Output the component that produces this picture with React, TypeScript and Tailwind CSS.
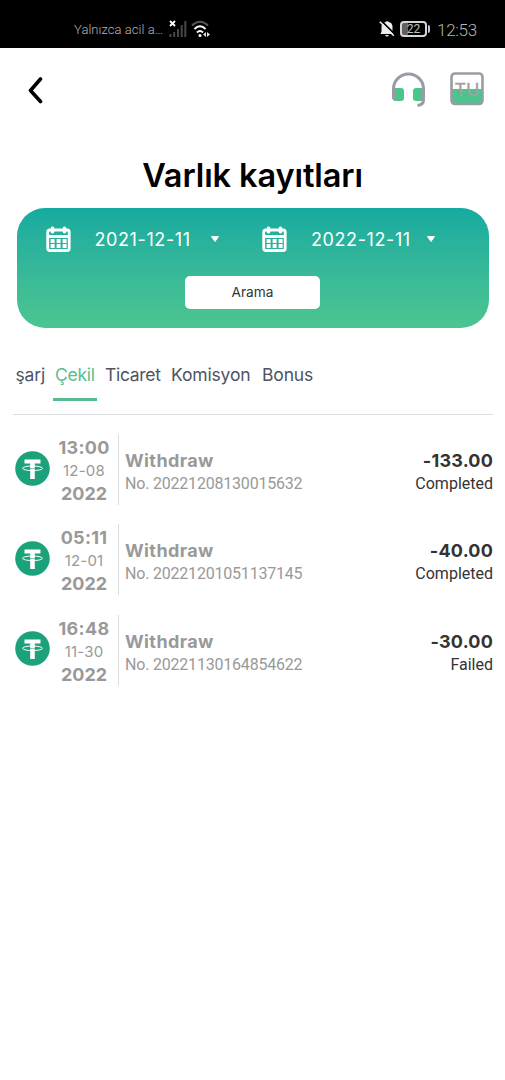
import React from 'react';

const records = [
  { time: '13:00', day: '12-08', year: '2022', no: '20221208130015632', amount: '-133.00', status: 'Completed' },
  { time: '05:11', day: '12-01', year: '2022', no: '20221201051137145', amount: '-40.00', status: 'Completed' },
  { time: '16:48', day: '11-30', year: '2022', no: '20221130164854622', amount: '-30.00', status: 'Failed' },
];

function StatusBar() {
  return (
    <div className="flex h-12 items-start bg-black pr-7 pl-[74px] text-[#b4b4b4]">
      <span className="mt-5 w-[95px] font-['Roboto',sans-serif] text-[13px] leading-5 font-light tracking-[0.050px] whitespace-nowrap">Yalnızca acil a…</span>
      <svg className="mt-[19px] h-[19px] w-[18px]" viewBox="0 0 18 19">
        <path d="M1 2l5 5M6 2L1 7" stroke="#fff" strokeWidth="1.8" />
        <path d="M1.5 15v3M5.2 13v5M9 10v8M12.7 6v12M16.3 2v16" stroke="#484848" strokeWidth="2" />
      </svg>
      <svg className="mt-[19px] ml-1 h-[19px] w-5" viewBox="0 0 20 19" fill="none">
        <path d="M1 6.5Q9 -1 17 6.5" stroke="#555" strokeWidth="2" />
        <path d="M3.500 10Q9 4.500 14.500 10M6 13.500q3-3 6 0" stroke="#fff" strokeWidth="2" />
        <circle cx="9" cy="16.500" r="1.500" fill="#fff" />
        <path d="M15 13v5l-3-2.500zM16 13v5l3-2.500z" fill="#ddd" />
      </svg>
      <div className="flex-1" />
      <svg className="mt-5 h-[18px] w-4" viewBox="0 0 16 18">
        <path d="M1.500 14h13.500l-1.500-2.500V7q0-4-3.200-4.700Q8 0 6.200 2.300 2.500 3 2.500 7v4.500zM6 15h4q-2 3-4 0z" fill="#eee" />
        <path d="M2.200 .6l14 14" stroke="#000" strokeWidth="1.600" />
        <path d="M.8 1.700l14 14" stroke="#eee" strokeWidth="1.600" />
      </svg>
      <div className="mt-[21px] ml-[5px] flex h-4 w-[27px] items-center justify-center rounded-[4px] border-2 border-[#d5d5d5] bg-linear-to-r from-[#606060] from-25% to-black to-25% font-['Roboto',sans-serif] text-[12px] leading-none text-[#c0c0c0]">22</div>
      <div className="mt-[25px] ml-px h-2 w-[2px] rounded-r bg-[#c8c8c8]" />
      <span className="mt-[20px] ml-[7px] w-[40px] font-['Roboto',sans-serif] text-[17px] leading-5 font-light tracking-[-0.3px] whitespace-nowrap">12:53</span>
    </div>
  );
}

function Calendar() {
  return (
    <svg className="h-[26px] w-[25px]" viewBox="0 0 25 26" fill="none">
      <rect x="1.700" y="4" width="21.500" height="20.500" rx="2" stroke="#fff" strokeWidth="2.800" />
      <path d="M1.500 10.500h22" stroke="#fff" strokeWidth="3" />
      <path d="M6.500 2.500v3M18.500 2.500v3" stroke="#fff" strokeWidth="3.800" strokeLinecap="round" />
      <path d="M4.600 15h16M4.600 20h16" stroke="#fff" strokeWidth="3.800" strokeDasharray="4 2" />
    </svg>
  );
}

function DateField({ value }: { value: string }) {
  return (
    <div className="flex h-[26px] w-[216.500px] items-center">
      <Calendar />
      <span className="mt-[2px] ml-[24px] w-[98px] text-[18px] leading-6 tracking-[0.600px] whitespace-nowrap">{value}</span>
      <svg className="ml-[17px] h-[9px] w-[10px]" viewBox="0 0 10 9">
        <path d="M1.500 1.500h7L5 6.500z" fill="#fff" stroke="#fff" strokeLinejoin="round" />
      </svg>
    </div>
  );
}

function Tether() {
  return (
    <svg className="mb-[3px] h-[35px] w-[35px]" viewBox="0 0 35 35" fill="none">
      <circle cx="17.500" cy="17.500" r="17.300" fill="#1ba27a" />
      <path d="M9.500 8.500h16v4h-5.700v15.500h-4.600V12.500H9.500z" fill="#fff" />
      <ellipse cx="17.500" cy="17.300" rx="10" ry="2.300" stroke="#fff" strokeWidth="1" />
      <path d="M15.200 17.500q2.300.3 4.600 0" stroke="#1ba27a" strokeWidth=".6" />
    </svg>
  );
}

export default function App() {
  return (
    <div className="min-h-[1080px] w-[505px] bg-white font-['Inter','Liberation_Sans',sans-serif]">
      <StatusBar />
      <header className="flex h-[84px] items-center pr-5 pl-7">
        <svg className="h-[28px] w-[16px]" viewBox="0 0 16 28" fill="none">
          <path d="M12.500 3L2.500 14.500 12.500 25.500" stroke="#000" strokeWidth="3.600" strokeLinecap="round" strokeLinejoin="round" />
        </svg>
        <div className="flex-1" />
        <svg className="mb-[1px] h-9 w-9" viewBox="0 0 36 36" fill="none">
          <rect x="1.500" y="16" width="11.500" height="13" rx="3" fill="#4bc58c" />
          <rect x="22" y="16" width="11.500" height="13" rx="3" fill="#4bc58c" />
          <path d="M2.500 27V17a15 15 0 0 1 30 0v11q0 5-6 5.500" stroke="#9b9ba5" strokeWidth="3" />
        </svg>
        <svg className="mb-[2px] ml-[22px] h-9 w-9" viewBox="0 0 36 36" fill="none">
          <path d="M3 18h30v13q0 2-2 2H5q-2 0-2-2z" fill="#4bc58c" />
          <rect x="2.500" y="2.500" width="31" height="30.500" rx="3.500" stroke="#9b9ba5" strokeWidth="2.600" />
          <text x="5.500" y="24.500" textLength="25" lengthAdjust="spacingAndGlyphs" fontSize="17" fill="#a0a0a0" stroke="#a0a0a0" strokeWidth=".4">TU</text>
        </svg>
      </header>
      <h1 className="flex h-[76px] items-center justify-center pt-[11px] text-[32.500px] leading-10 font-semibold tracking-[-0.100px] text-black">Varlık kayıtları</h1>
      <section className="mr-4 ml-[17px] flex h-[120px] flex-col items-center rounded-[28px] bg-linear-to-b from-[#14aaa0] to-[#4cc590] pt-[18px] text-white">
        <div className="flex w-full pl-[28.500px]">
          <DateField value="2021-12-11" />
          <DateField value="2022-12-11" />
        </div>
        <button className="mt-6 mr-px h-[33px] w-[135px] rounded-[5px] bg-white text-[13.700px] text-[#333]">Arama</button>
      </section>
      <nav className="mr-3 ml-[13px] flex h-[87px] border-b border-[#ddd] pt-[33px] text-[17.500px] leading-7 tracking-[-0.150px] text-[#4c5462]">
        <span className="w-10 pl-[2.500px]">şarj</span>
        <span className="h-10 w-11 border-b-[3px] border-[#57bd90] pl-[2px] tracking-[-0.300px] text-[#57bd90]">Çekil</span>
        <span className="w-[66px] pl-2 tracking-[-0.300px]">Ticaret</span>
        <span className="w-[91px] pl-2">Komisyon</span>
        <span className="pl-2">Bonus</span>
      </nav>
      <main className="flex flex-col gap-[19.300px] pt-[19px]">
        {records.map((r) => (
          <div key={r.no} className="flex h-[71px] items-center pr-3 pl-[15px]">
            <Tether />
            <div className="flex h-[71px] w-[69px] flex-col items-center justify-center border-r border-[#ddd] pt-[2px] text-[18px] leading-[23px] font-bold text-[#999]">
              <span className="tracking-[0.300px]">{r.time}</span>
              <span className="text-[15px] font-normal tracking-[0.200px]">{r.day}</span>
              <span>{r.year}</span>
            </div>
            <div className="ml-[6px] flex flex-1 flex-col pt-[5px] leading-[23px] text-[#999]">
              <span className="text-[18px] font-bold tracking-[0.400px]">Withdraw</span>
              <span className="font-['Roboto',sans-serif] text-[16px] tracking-[-0.200px]">No. {r.no}</span>
            </div>
            <div className="flex flex-col items-end pt-[5px] leading-[23px] text-[#333]">
              <span className="text-[18px] font-bold tracking-[0.200px]">{r.amount}</span>
              <span className="font-['Roboto',sans-serif] text-[16px]">{r.status}</span>
            </div>
          </div>
        ))}
      </main>
    </div>
  );
}
